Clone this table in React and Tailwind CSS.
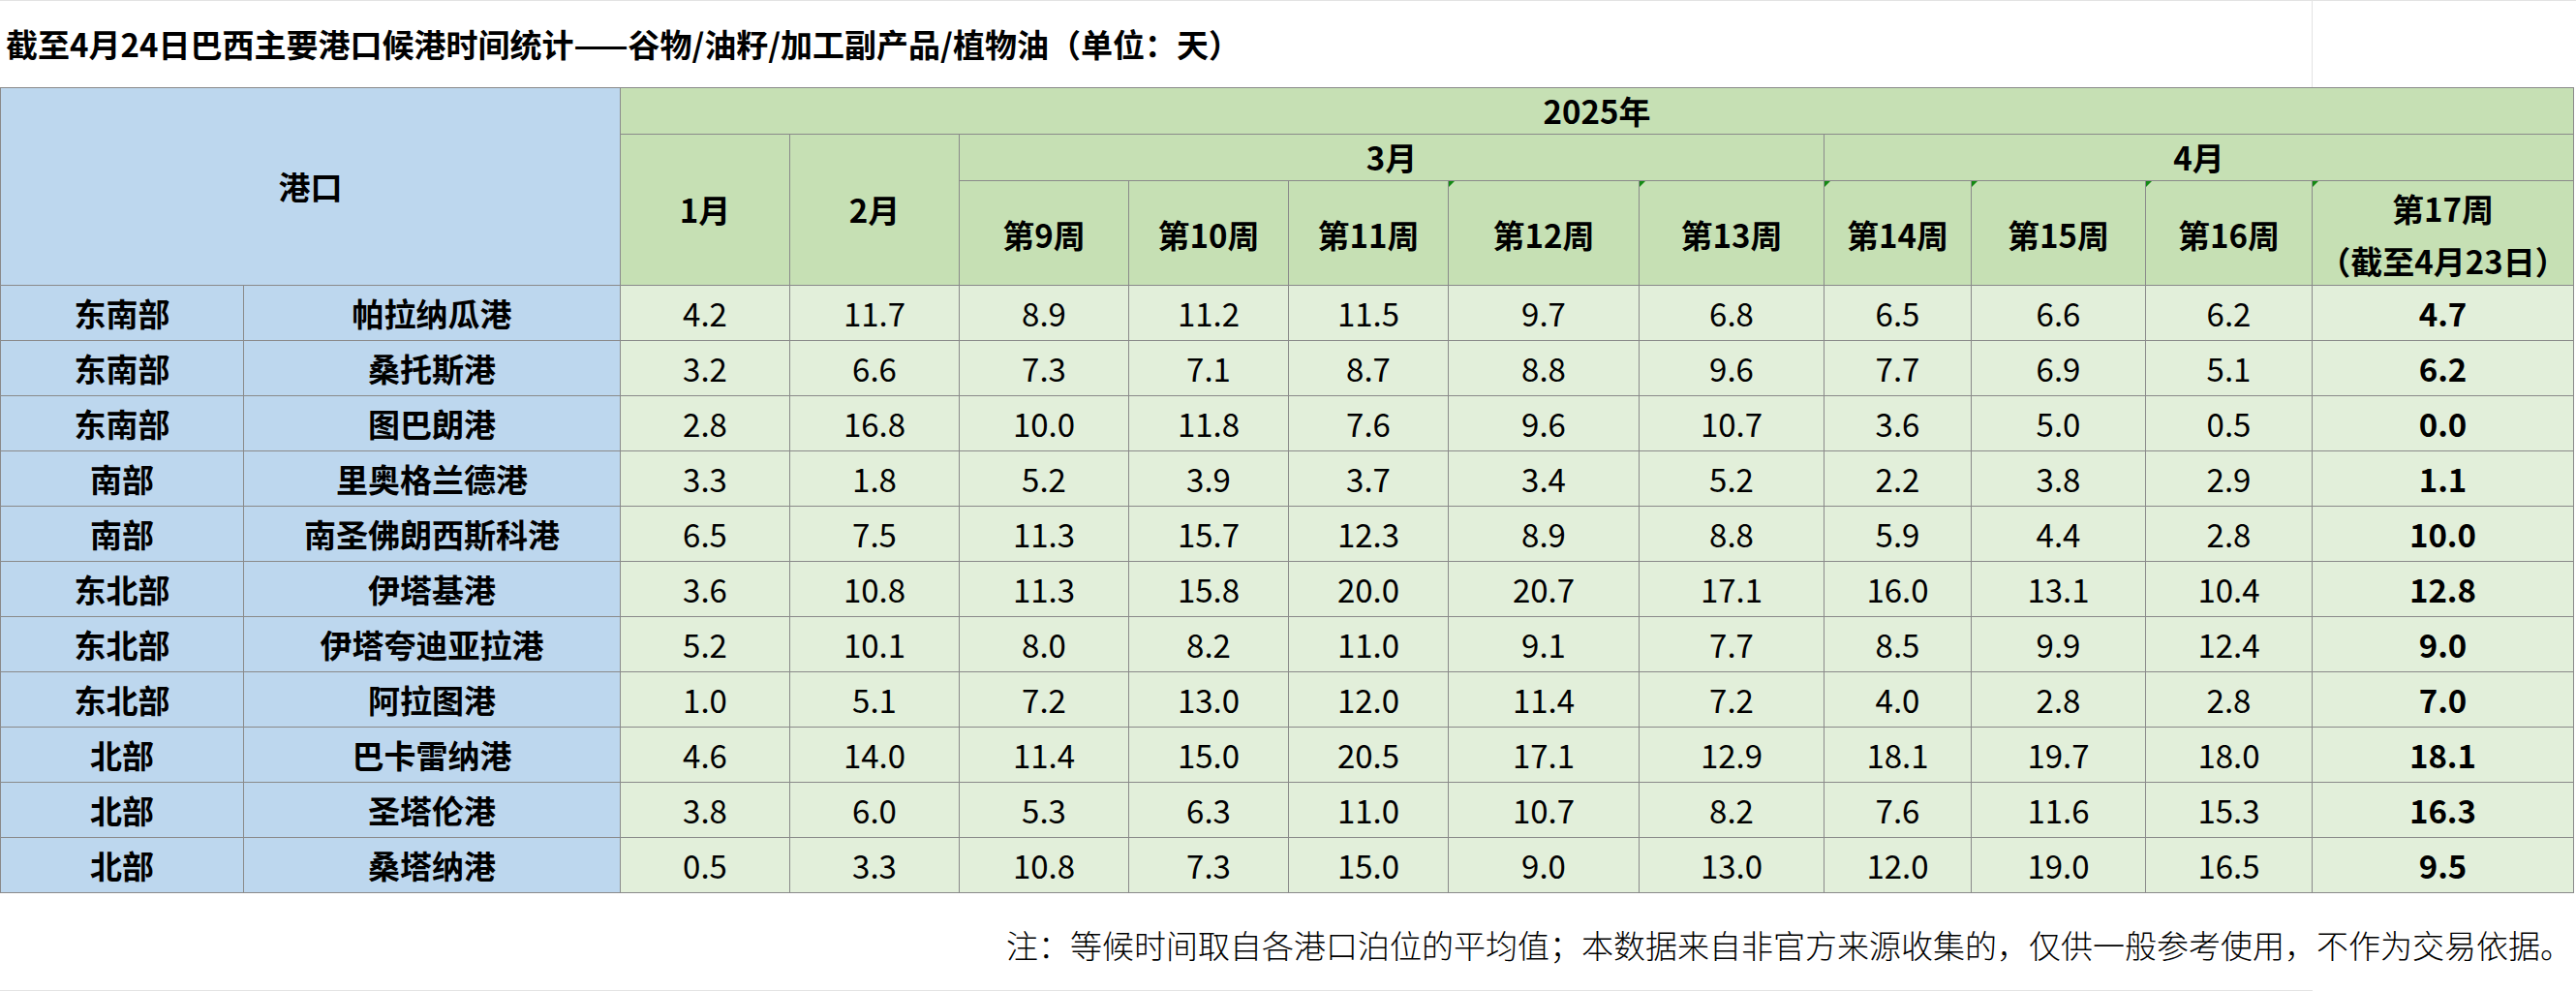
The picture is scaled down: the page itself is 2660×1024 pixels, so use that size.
import React from "react";

const weeks = [
  { label: "第9周" },
  { label: "第10周" },
  { label: "第11周" },
  { label: "第12周", flag: true },
  { label: "第13周", flag: true },
  { label: "第14周", flag: true },
  { label: "第15周", flag: true },
  { label: "第16周", flag: true },
];

const rows = [
  ["东南部", "帕拉纳瓜港", ["4.2", "11.7", "8.9", "11.2", "11.5", "9.7", "6.8", "6.5", "6.6", "6.2", "4.7"]],
  ["东南部", "桑托斯港", ["3.2", "6.6", "7.3", "7.1", "8.7", "8.8", "9.6", "7.7", "6.9", "5.1", "6.2"]],
  ["东南部", "图巴朗港", ["2.8", "16.8", "10.0", "11.8", "7.6", "9.6", "10.7", "3.6", "5.0", "0.5", "0.0"]],
  ["南部", "里奥格兰德港", ["3.3", "1.8", "5.2", "3.9", "3.7", "3.4", "5.2", "2.2", "3.8", "2.9", "1.1"]],
  ["南部", "南圣佛朗西斯科港", ["6.5", "7.5", "11.3", "15.7", "12.3", "8.9", "8.8", "5.9", "4.4", "2.8", "10.0"]],
  ["东北部", "伊塔基港", ["3.6", "10.8", "11.3", "15.8", "20.0", "20.7", "17.1", "16.0", "13.1", "10.4", "12.8"]],
  ["东北部", "伊塔夸迪亚拉港", ["5.2", "10.1", "8.0", "8.2", "11.0", "9.1", "7.7", "8.5", "9.9", "12.4", "9.0"]],
  ["东北部", "阿拉图港", ["1.0", "5.1", "7.2", "13.0", "12.0", "11.4", "7.2", "4.0", "2.8", "2.8", "7.0"]],
  ["北部", "巴卡雷纳港", ["4.6", "14.0", "11.4", "15.0", "20.5", "17.1", "12.9", "18.1", "19.7", "18.0", "18.1"]],
  ["北部", "圣塔伦港", ["3.8", "6.0", "5.3", "6.3", "11.0", "10.7", "8.2", "7.6", "11.6", "15.3", "16.3"]],
  ["北部", "桑塔纳港", ["0.5", "3.3", "10.8", "7.3", "15.0", "9.0", "13.0", "12.0", "19.0", "16.5", "9.5"]],
];

function Flag() {
  return (
    <span className="absolute left-0 top-0 w-0 h-0 border-t-[6px] border-r-[6px] border-t-[#138a13] border-r-transparent" />
  );
}

export default function App() {
  return (
    <div className="w-[2660px] h-[1024px] bg-white text-black font-['Noto_Sans_CJK_SC',sans-serif]">
      {/* title */}
      <div className="flex h-[90px] border-t border-[#e3e3e3]">
        <div className="w-[2387px] flex items-center pl-[6px] text-[33px] font-bold leading-none">
          截至4月24日巴西主要港口候港时间统计——谷物/油籽/加工副产品/植物油（单位：天）
        </div>
        <div className="flex-1 border-l border-[#e3e3e3]" />
      </div>

      {/* table */}
      <div className="grid w-fit grid-cols-[250px_388px_174px_174px_174px_164px_164px_196px_190px_151px_179px_171px_269px] grid-rows-[47px_47px_107px_repeat(11,56px)] gap-px bg-[#8a8a8a] border border-[#8a8a8a] text-[33px] leading-none">
        <div className="col-span-2 row-span-3 bg-[#bdd7ee] flex items-center justify-center font-bold">
          港口
        </div>
        <div className="col-span-11 bg-[#c6e0b4] flex items-center justify-center font-bold">
          2025年
        </div>
        <div className="row-span-2 bg-[#c6e0b4] flex items-center justify-center font-bold">
          1月
        </div>
        <div className="row-span-2 bg-[#c6e0b4] flex items-center justify-center font-bold">
          2月
        </div>
        <div className="col-span-5 bg-[#c6e0b4] flex items-center justify-center font-bold">
          3月
        </div>
        <div className="col-span-4 bg-[#c6e0b4] flex items-center justify-center font-bold">
          4月
        </div>
        {weeks.map((w) => (
          <div
            key={w.label}
            className="relative bg-[#c6e0b4] flex items-center justify-center font-bold pt-[4px]"
          >
            {w.flag && <Flag />}
            {w.label}
          </div>
        ))}
        <div className="relative bg-[#c6e0b4] flex flex-col items-center justify-center gap-[21px] font-bold pt-[4px]">
          <Flag />
          <span>第17周</span>
          <span>（截至4月23日）</span>
        </div>

        {rows.map(([region, port, vals], i) => (
          <React.Fragment key={i}>
            <div className="bg-[#bdd7ee] flex items-center justify-center font-bold">
              {region}
            </div>
            <div className="bg-[#bdd7ee] flex items-center justify-center font-bold">
              {port}
            </div>
            {vals.map((v, j) => (
              <div
                key={j}
                className={`bg-[#e2efda] flex items-center justify-center ${
                  j === vals.length - 1 ? "font-bold" : "font-normal"
                }`}
              >
                {v}
              </div>
            ))}
          </React.Fragment>
        ))}
      </div>

      {/* note */}
      <div className="h-[100px] flex items-center justify-end pr-[4px] pt-[6px] text-[33px] font-light leading-none">
        注：等候时间取自各港口泊位的平均值；本数据来自非官方来源收集的，仅供一般参考使用，不作为交易依据。
      </div>
      <div className="h-px w-[2388px] bg-[#e3e3e3]" />
    </div>
  );
}
